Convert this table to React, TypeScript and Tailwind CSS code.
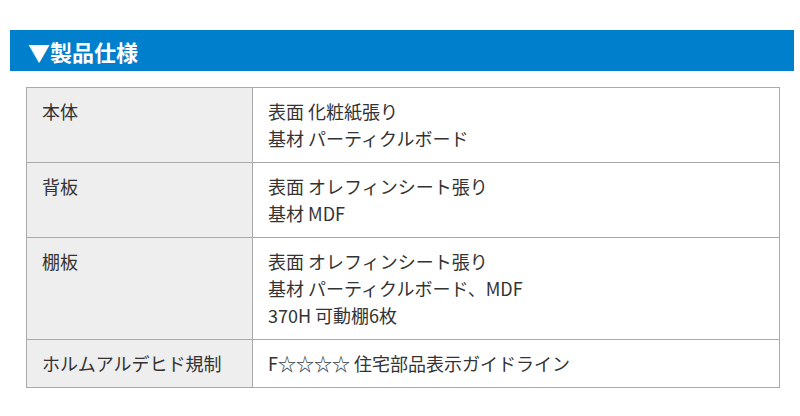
const specs: { label: string; lines: string[] }[] = [
  { label: "本体", lines: ["表面 化粧紙張り", "基材 パーティクルボード"] },
  { label: "背板", lines: ["表面 オレフィンシート張り", "基材 MDF"] },
  { label: "棚板", lines: ["表面 オレフィンシート張り", "基材 パーティクルボード、MDF", "370H 可動棚6枚"] },
  { label: "ホルムアルデヒド規制", lines: ["F☆☆☆☆ 住宅部品表示ガイドライン"] },
];

export default function App() {
  return (
    <div
      className="w-[800px] h-[416px] bg-white pt-[30px] text-[#333]"
      style={{ fontFamily: '"Noto Sans CJK JP", "Noto Sans", sans-serif' }}
    >
      {/* Heading */}
      <div className="ml-[10px] w-[784px] h-[41px] bg-[#0080cc] flex items-center pl-[18px]">
        <h2 className="text-white font-bold text-[22px] leading-none">▼製品仕様</h2>
      </div>

      {/* Spec table */}
      <table className="ml-[26px] mt-[16px] w-[754px] border-collapse text-[18px] leading-[27px]">
        <tbody>
          {specs.map((row) => (
            <tr key={row.label}>
              <th className="w-[226px] bg-[#eeeeee] border border-[#aaaaaa] px-[15px] py-[10px] text-left font-normal align-top">
                {row.label}
              </th>
              <td className="border border-[#aaaaaa] px-[15px] py-[10px] align-top">
                {row.lines.map((l) => (
                  <div key={l}>{l}</div>
                ))}
              </td>
            </tr>
          ))}
        </tbody>
      </table>
    </div>
  );
}
